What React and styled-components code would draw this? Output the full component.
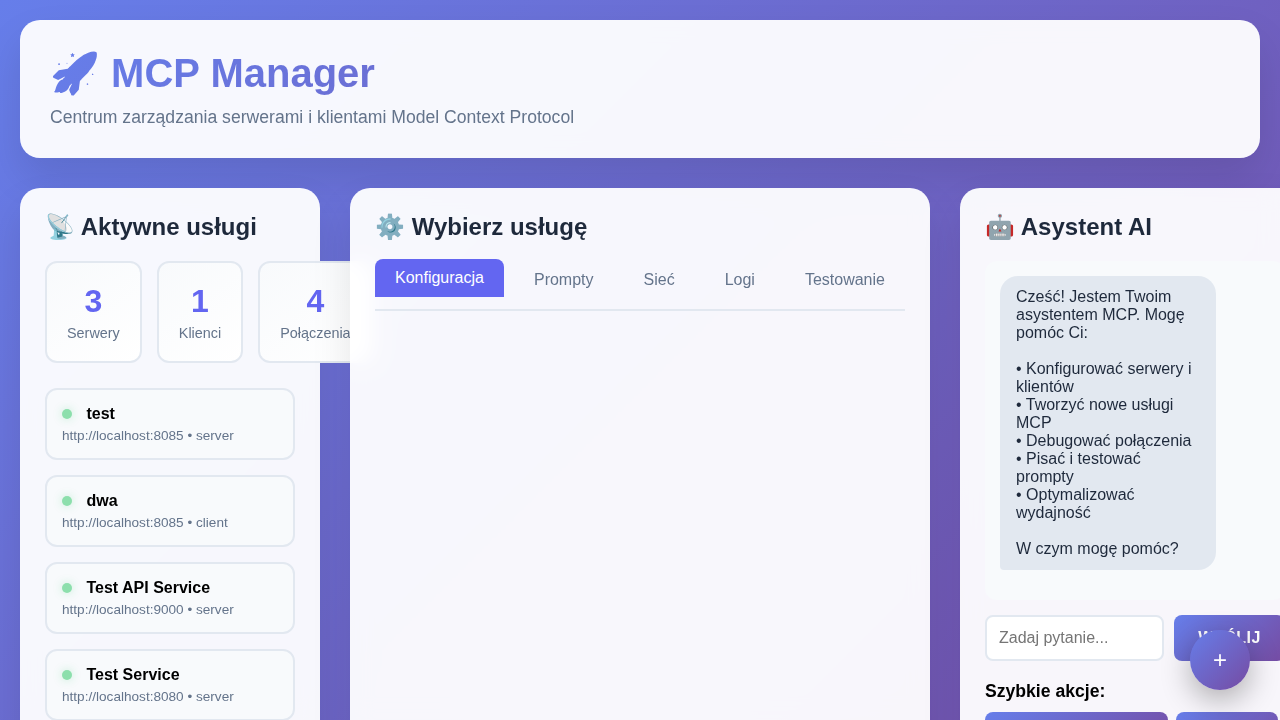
import React from "react";
import styled, { createGlobalStyle } from "styled-components";

const GlobalStyle = createGlobalStyle`
  * { margin: 0; padding: 0; box-sizing: border-box; }
  html { overflow: hidden; }
  body {
    font-family: "Liberation Sans", Arial, sans-serif;
    background: linear-gradient(135deg, #667eea 0%, #764ba2 100%);
    min-height: 100vh;
  }
`;

const Page = styled.div`
  display: flex;
  flex-direction: column;
  gap: 30px;
  min-height: 940px;
  padding: 20px;
`;

const Panel = styled.section`
  min-width: 0;
  padding: 25px;
  border-radius: 20px;
  background: rgba(255, 255, 255, 0.95);
  backdrop-filter: blur(10px);
  box-shadow: 0 20px 40px rgba(0, 0, 0, 0.1);
`;

const Header = styled(Panel).attrs({ as: "header" })`
  height: 138px;
  padding: 30px;
`;

const Title = styled.h1`
  margin-bottom: 10px;
  font-size: 40px;
  background: linear-gradient(135deg, #667eea, #764ba2);
  background-clip: text;
  -webkit-background-clip: text;
  -webkit-text-fill-color: transparent;
`;

const Subtitle = styled.p`
  color: #64748b;
  font-size: 17.6px;
`;

const Columns = styled.main`
  display: grid;
  grid-template-columns: 300px 580px 350px;
  gap: 30px;
  flex: 1;
`;

const PanelTitle = styled.h2`
  height: 28px;
  margin-bottom: 20px;
  color: #1e293b;
  font-size: 24px;
`;

const Stats = styled.div`
  display: flex;
  gap: 15px;
  margin-bottom: 25px;
`;

const StatCard = styled.div`
  flex: none;
  height: 102px;
  padding: 20px;
  border: 2px solid #e2e8f0;
  border-radius: 12px;
  background: linear-gradient(145deg, #f8fafc, #ffffff);
  text-align: center;
`;

const StatValue = styled.div`
  color: #6366f1;
  font-size: 32px;
  font-weight: bold;
`;

const StatLabel = styled.div`
  margin-top: 5px;
  color: #64748b;
  font-size: 14.4px;
`;

const Service = styled.div`
  margin-bottom: 15px;
  padding: 15px;
  height: 72px;
  border: 2px solid #e2e8f0;
  border-radius: 12px;
  background: #f8fafc;
`;

const StatusDot = styled.span`
  display: inline-block;
  width: 10px;
  height: 10px;
  margin-right: 10px;
  border-radius: 50%;
  background: #22c55e;
  box-shadow: 0 0 10px rgba(34, 197, 94, 0.5);
  opacity: 0.5;
`;

const ServiceUrl = styled.div`
  margin-top: 5px;
  color: #64748b;
  font-size: 13.6px;
`;

const Tabs = styled.nav`
  display: flex;
  gap: 10px;
  padding-bottom: 10px;
  border-bottom: 2px solid #e2e8f0;
`;

const Tab = styled.button`
  padding: 10px 20px;
  border: none;
  border-radius: 8px 8px 0 0;
  background: ${(p) => (p.$active ? "#6366f1" : "none")};
  color: ${(p) => (p.$active ? "#fff" : "#64748b")};
  font: 16px "Liberation Sans", Arial, sans-serif;
  transform: ${(p) => (p.$active ? "translateY(-2px)" : "none")};
`;

const Chat = styled.div`
  height: 339px;
  margin-bottom: 15px;
  padding: 15px;
  border-radius: 12px;
  background: #f8fafc;
`;

const Message = styled.div`
  max-width: 80%;
  padding: 12px 16px;
  border-radius: 18px 18px 18px 4px;
  background: #e2e8f0;
  color: #1e293b;
  white-space: pre-line;
`;

const ChatForm = styled.div`
  display: flex;
  gap: 10px;
  margin-bottom: 20px;
`;

const ChatInput = styled.input`
  flex: 1;
  min-width: 0;
  padding: 12px;
  border: 2px solid #e2e8f0;
  border-radius: 8px;
  background: #fff;
  font: 16px "Liberation Sans", Arial, sans-serif;
`;

const Button = styled.button`
  width: ${(p) => p.$width}px;
  height: 46px;
  border: none;
  border-radius: 8px;
  background: linear-gradient(135deg, #667eea, #764ba2);
  color: #fff;
  font: 600 16px "Liberation Sans", Arial, sans-serif;
  letter-spacing: 0.5px;
  text-transform: uppercase;
`;

const QuickTitle = styled.h3`
  margin-bottom: 10px;
  font-size: 17.6px;
  line-height: 21px;
`;

const QuickActions = styled.div`
  display: flex;
  gap: 8px;
`;

const AddButton = styled.button`
  position: fixed;
  right: 30px;
  bottom: 30px;
  width: 60px;
  height: 60px;
  border: none;
  border-radius: 50%;
  background: linear-gradient(135deg, #667eea, #764ba2);
  box-shadow: 0 10px 30px rgba(0, 0, 0, 0.3);
  color: #fff;
  font: 24px "Liberation Sans", Arial, sans-serif;
`;

const stats = [
  ["3", "Serwery"],
  ["1", "Klienci"],
  ["4", "Połączenia"],
];

const services = [
  ["test", "http://localhost:8085 • server"],
  ["dwa", "http://localhost:8085 • client"],
  ["Test API Service", "http://localhost:9000 • server"],
  ["Test Service", "http://localhost:8080 • server"],
];

const tabs = ["Konfiguracja", "Prompty", "Sieć", "Logi", "Testowanie"];

const greeting = `Cześć! Jestem Twoim asystentem MCP. Mogę pomóc Ci:

• Konfigurować serwery i klientów
• Tworzyć nowe usługi MCP
• Debugować połączenia
• Pisać i testować prompty
• Optymalizować wydajność

W czym mogę pomóc?`;

export default function App() {
  return (
    <>
      <GlobalStyle />
      <Page>
        <Header>
          <Title>🚀 MCP Manager</Title>
          <Subtitle>Centrum zarządzania serwerami i klientami Model Context Protocol</Subtitle>
        </Header>
        <Columns>
          <Panel>
            <PanelTitle>📡 Aktywne usługi</PanelTitle>
            <Stats>
              {stats.map(([value, label]) => (
                <StatCard key={label}>
                  <StatValue>{value}</StatValue>
                  <StatLabel>{label}</StatLabel>
                </StatCard>
              ))}
            </Stats>
            {services.map(([name, url]) => (
              <Service key={name}>
                <div>
                  <StatusDot /> <strong>{name}</strong>
                </div>
                <ServiceUrl>{url}</ServiceUrl>
              </Service>
            ))}
          </Panel>
          <Panel>
            <PanelTitle>⚙️ Wybierz usługę</PanelTitle>
            <Tabs>
              {tabs.map((tab, i) => (
                <Tab key={tab} $active={i === 0}>{tab}</Tab>
              ))}
            </Tabs>
          </Panel>
          <Panel>
            <PanelTitle>🤖 Asystent AI</PanelTitle>
            <Chat>
              <Message>{greeting}</Message>
            </Chat>
            <ChatForm>
              <ChatInput placeholder="Zadaj pytanie..." />
              <Button $width={111}>Wyślij</Button>
            </ChatForm>
            <QuickTitle>Szybkie akcje:</QuickTitle>
            <QuickActions>
              <Button $width={183} />
              <Button $width={102} />
            </QuickActions>
          </Panel>
        </Columns>
      </Page>
      <AddButton>+</AddButton>
    </>
  );
}
